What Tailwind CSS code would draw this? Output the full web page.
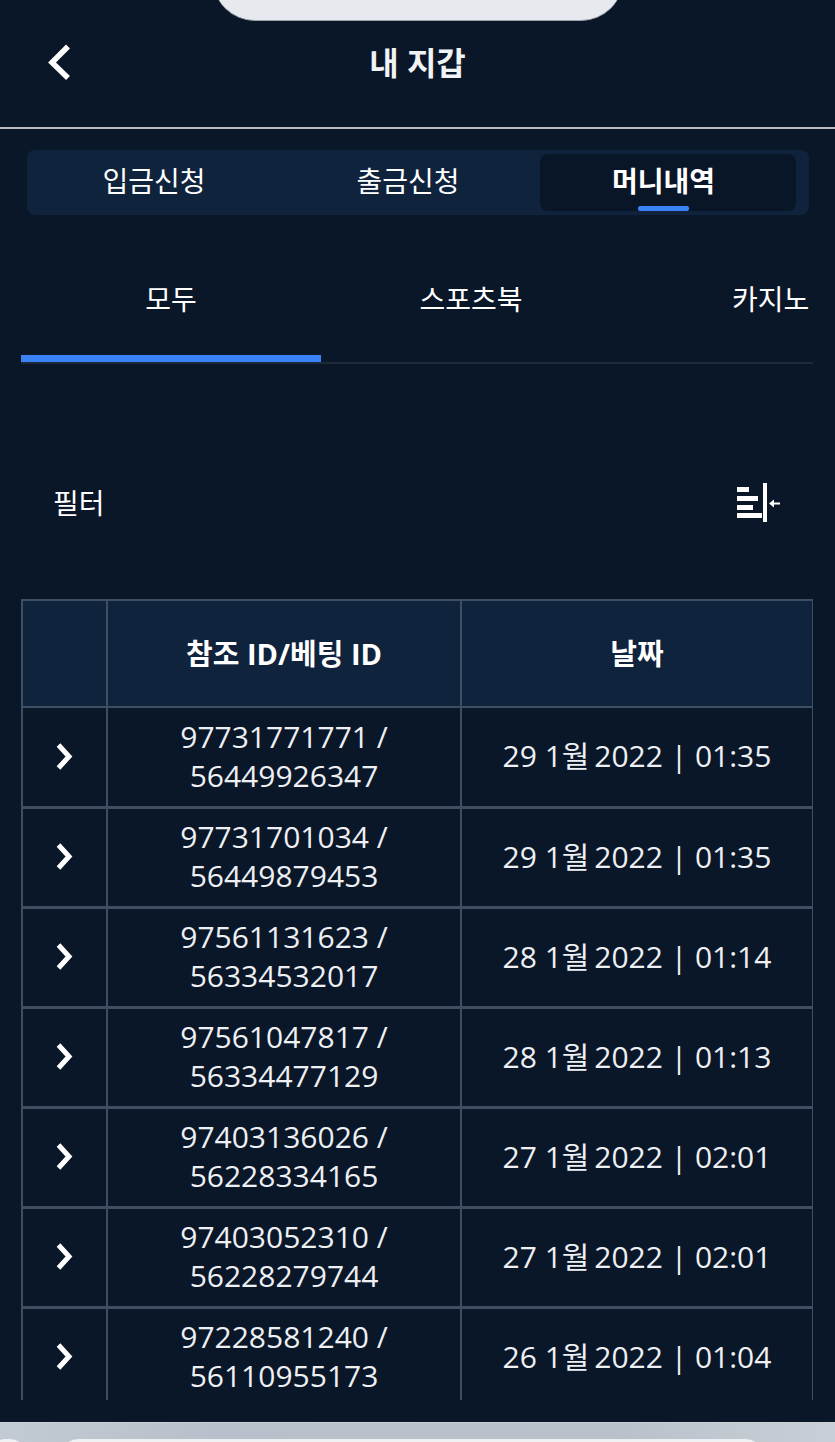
<!DOCTYPE html>
<html lang="ko">
<head>
  <meta charset="UTF-8" />
  <title>내 지갑</title>
  <script src="https://cdn.jsdelivr.net/npm/@tailwindcss/browser@4"></script>
</head>
<body class="bg-[#0a1729] text-white font-['Open_Sans','Noto_Sans_CJK_KR',sans-serif]">
<div class="w-[835px] h-[1442px] overflow-hidden flex flex-col">

  <!-- header -->
  <header class="relative h-[129px] shrink-0 border-b-2 border-[#b9bcc0] flex items-center justify-center">
    <div class="absolute -top-[40px] left-[213px] w-[410px] h-[61px] bg-[#e6eaef] rounded-b-[42px] border-b border-[#9aa0a8]"></div>
    <svg class="absolute left-[44px] top-[42px]" width="30" height="40" viewBox="0 0 30 40" fill="none">
      <path d="M24 4.500 L8 20.500 L24 36" stroke="#fff" stroke-width="5.500"/>
    </svg>
    <h1 class="text-[32px] font-bold leading-none text-[#f2f3f5] -mt-[1px]">내 지갑</h1>
  </header>

  <!-- wallet tabs -->
  <div class="mt-[21px] ml-[27px] mr-[26px] h-[65px] rounded-[8px] bg-[#10233d] grid grid-cols-[255px_256px_256px] pl-[2px] py-[4px] text-[28px] shrink-0">
    <div class="flex items-center justify-center pb-[3px] pr-[5px]">입금신청</div>
    <div class="flex items-center justify-center pb-[3px] pr-[8px]">출금신청</div>
    <div class="relative flex items-center justify-center pb-[3px] pr-[9px] bg-[#091627] rounded-[8px] font-bold w-[256px]">머니내역
      <span class="absolute bottom-0 left-[98px] w-[51px] h-[5px] rounded-[2px] bg-[#3b82f6]"></span>
    </div>
  </div>

  <!-- category tabs -->
  <div class="mt-[50px] ml-[21px] mr-[22px] h-[99px] border-b-2 border-[#1d2a3a] flex text-[28px] shrink-0 overflow-hidden">
    <div class="w-[300px] h-[97px] shrink-0 border-b-[7px] border-[#3b82f6] flex items-start justify-center pt-[13px]">모두</div>
    <div class="w-[300px] shrink-0 flex items-start justify-center pt-[13px]">스포츠북</div>
    <div class="w-[300px] shrink-0 flex items-start justify-start pl-[111px] pt-[13px]">카지노</div>
  </div>

  <!-- filter -->
  <div class="mt-[117px] ml-[53px] mr-[55px] flex items-center justify-between h-[44px] shrink-0">
    <span class="text-[28px]">필터</span>
    <svg width="44" height="40" viewBox="0 0 44 40" fill="#fff">
      <rect x="1" y="4" width="12" height="5"/>
      <rect x="1" y="13" width="21" height="5"/>
      <rect x="1" y="22" width="16" height="5"/>
      <rect x="1" y="30" width="25" height="5"/>
      <rect x="27" y="0" width="4" height="39"/>
      <path d="M33 20.500 L38 16.500 V19.500 H44 V21.500 H38 V24.500 Z"/>
    </svg>
  </div>

  <!-- table -->
  <div class="mt-[73px] ml-[20px] w-[793px] h-[802px] overflow-hidden shrink-0 p-[1px]">
    <table class="w-[791px] table-fixed border-collapse text-[30px] leading-[39px] text-[#eef0f3] text-center [&_td+td]:pb-[2px] [&_td]:border-b-[3px]">
      <colgroup>
        <col class="w-[85px]" />
        <col class="w-[354px]" />
        <col class="w-[352px]" />
      </colgroup>
      <thead>
        <tr class="h-[107px] bg-[#10233d] text-white text-[29px]">
          <th class="border-2 border-[#3e4f64]"></th>
          <th class="border-2 border-[#3e4f64] font-bold">참조 ID/베팅 ID</th>
          <th class="border-2 border-[#3e4f64] font-bold">날짜</th>
        </tr>
      </thead>
      <tbody>
        <tr class="h-[100px]">
          <td class="border-2 border-[#3e4f64]"><svg class="mx-auto" width="20" height="30" viewBox="0 0 20 30" fill="none"><path d="M3.500 3 L14 14.500 L3.500 26" stroke="#fff" stroke-width="5"/></svg></td>
          <td class="border-2 border-[#3e4f64]">97731771771 /<br>56449926347</td>
          <td class="border-2 border-[#3e4f64]">29 1<span class="tracking-[-3px]">월</span> 2022 | 01:35</td>
        </tr>
        <tr class="h-[100px]">
          <td class="border-2 border-[#3e4f64]"><svg class="mx-auto" width="20" height="30" viewBox="0 0 20 30" fill="none"><path d="M3.500 3 L14 14.500 L3.500 26" stroke="#fff" stroke-width="5"/></svg></td>
          <td class="border-2 border-[#3e4f64]">97731701034 /<br>56449879453</td>
          <td class="border-2 border-[#3e4f64]">29 1<span class="tracking-[-3px]">월</span> 2022 | 01:35</td>
        </tr>
        <tr class="h-[100px]">
          <td class="border-2 border-[#3e4f64]"><svg class="mx-auto" width="20" height="30" viewBox="0 0 20 30" fill="none"><path d="M3.500 3 L14 14.500 L3.500 26" stroke="#fff" stroke-width="5"/></svg></td>
          <td class="border-2 border-[#3e4f64]">97561131623 /<br>56334532017</td>
          <td class="border-2 border-[#3e4f64]">28 1<span class="tracking-[-3px]">월</span> 2022 | 01:14</td>
        </tr>
        <tr class="h-[100px]">
          <td class="border-2 border-[#3e4f64]"><svg class="mx-auto" width="20" height="30" viewBox="0 0 20 30" fill="none"><path d="M3.500 3 L14 14.500 L3.500 26" stroke="#fff" stroke-width="5"/></svg></td>
          <td class="border-2 border-[#3e4f64]">97561047817 /<br>56334477129</td>
          <td class="border-2 border-[#3e4f64]">28 1<span class="tracking-[-3px]">월</span> 2022 | 01:13</td>
        </tr>
        <tr class="h-[100px]">
          <td class="border-2 border-[#3e4f64]"><svg class="mx-auto" width="20" height="30" viewBox="0 0 20 30" fill="none"><path d="M3.500 3 L14 14.500 L3.500 26" stroke="#fff" stroke-width="5"/></svg></td>
          <td class="border-2 border-[#3e4f64]">97403136026 /<br>56228334165</td>
          <td class="border-2 border-[#3e4f64]">27 1<span class="tracking-[-3px]">월</span> 2022 | 02:01</td>
        </tr>
        <tr class="h-[100px]">
          <td class="border-2 border-[#3e4f64]"><svg class="mx-auto" width="20" height="30" viewBox="0 0 20 30" fill="none"><path d="M3.500 3 L14 14.500 L3.500 26" stroke="#fff" stroke-width="5"/></svg></td>
          <td class="border-2 border-[#3e4f64]">97403052310 /<br>56228279744</td>
          <td class="border-2 border-[#3e4f64]">27 1<span class="tracking-[-3px]">월</span> 2022 | 02:01</td>
        </tr>
        <tr class="h-[100px]">
          <td class="border-2 border-[#3e4f64]"><svg class="mx-auto" width="20" height="30" viewBox="0 0 20 30" fill="none"><path d="M3.500 3 L14 14.500 L3.500 26" stroke="#fff" stroke-width="5"/></svg></td>
          <td class="border-2 border-[#3e4f64]">97228581240 /<br>56110955173</td>
          <td class="border-2 border-[#3e4f64]">26 1<span class="tracking-[-3px]">월</span> 2022 | 01:04</td>
        </tr>
      </tbody>
    </table>
  </div>

  <!-- browser bar at the bottom -->
  <div class="mt-[22px] flex-1 bg-[linear-gradient(90deg,#c2cad2,#b8c1cb_25%,#b9c2cb_75%,#c8cfd6)] border-t border-[#ccd1d7] relative">
    <div class="absolute left-[62px] top-[16px] w-[700px] h-[20px] bg-[#eef1f3] rounded-t-[16px]"></div>
    <div class="absolute -left-[10px] top-[16px] w-[36px] h-[20px] bg-[#eef1f3] rounded-t-[16px]"></div>
  </div>
</div>
</body>
</html>
